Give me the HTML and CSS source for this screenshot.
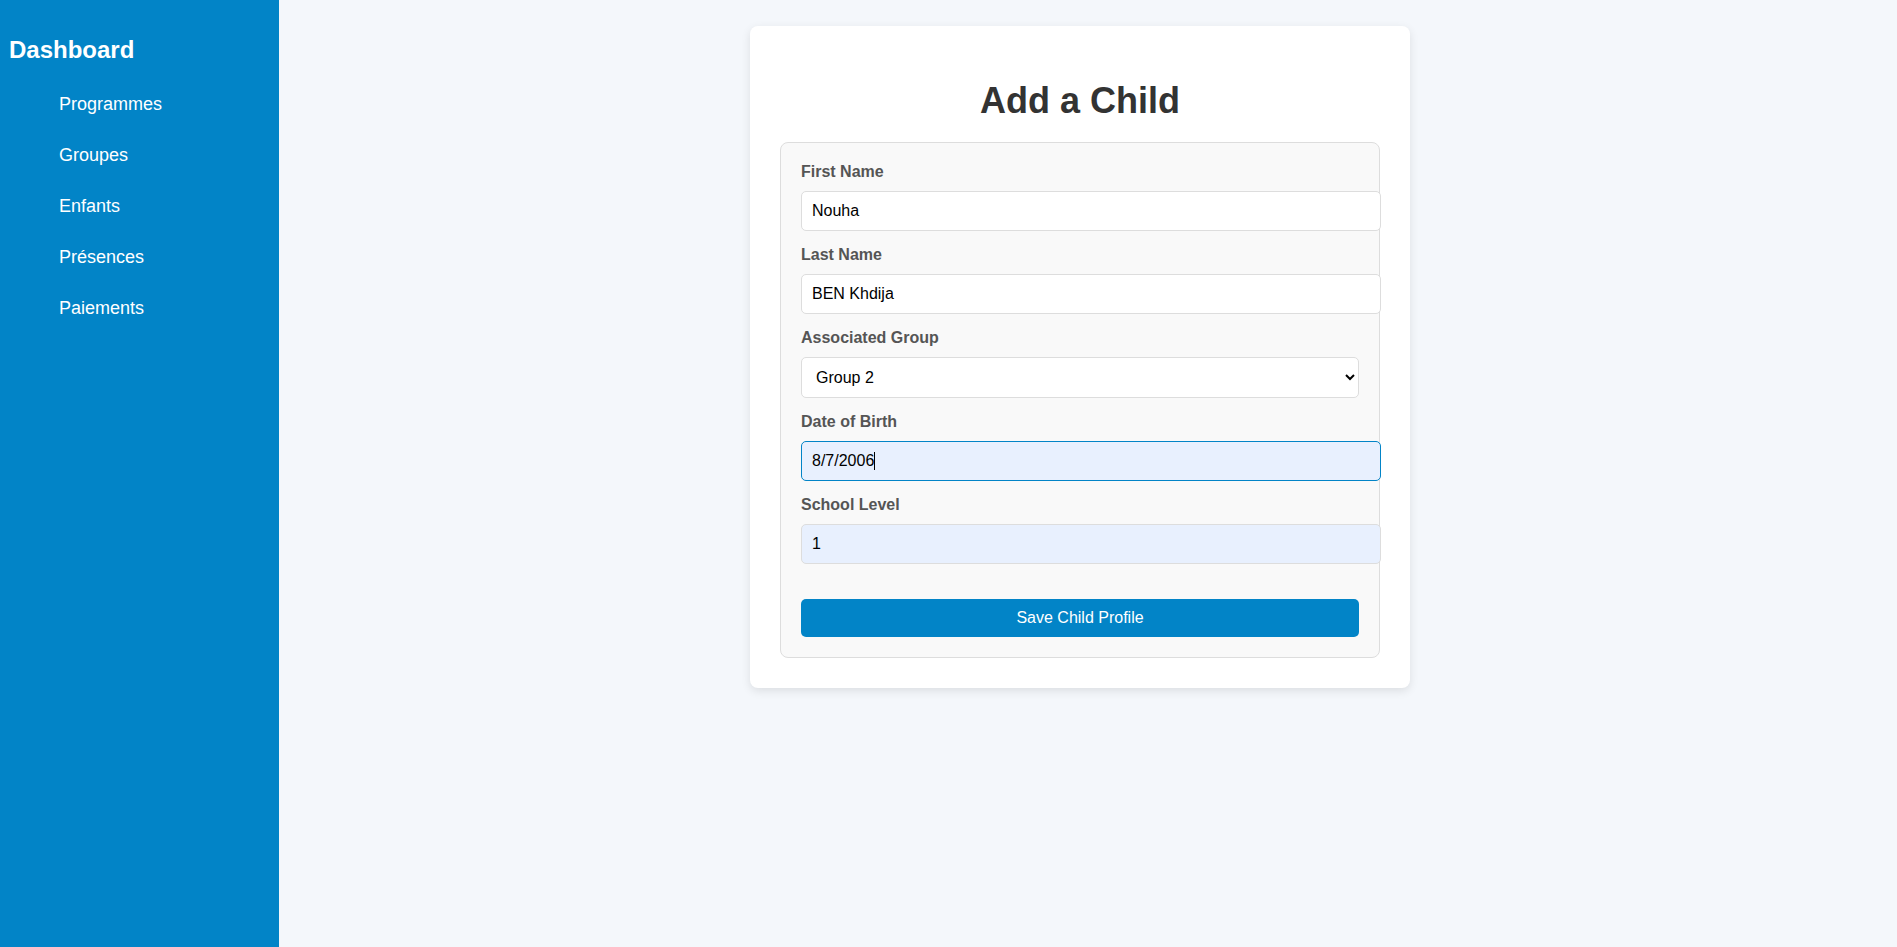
FILE: index.html
```html
<!DOCTYPE html>
<html lang="fr">
<head>
<meta charset="utf-8">
<title>Add a Child</title>
<link rel="stylesheet" href="styles.css">
</head>
<body>
<div class="layout">
  <aside class="sidebar">
    <h2 class="brand">Dashboard</h2>
    <ul class="nav">
      <li><a href="#">Programmes</a></li>
      <li><a href="#">Groupes</a></li>
      <li><a href="#">Enfants</a></li>
      <li><a href="#">Présences</a></li>
      <li><a href="#">Paiements</a></li>
    </ul>
  </aside>
  <main class="main">
    <section class="card">
      <h1 class="title">Add a Child</h1>
      <form class="form">
        <label class="label">First Name</label>
        <input class="field" type="text" value="Nouha">
        <label class="label">Last Name</label>
        <input class="field" type="text" value="BEN Khdija">
        <label class="label">Associated Group</label>
        <select class="select">
          <option>Group 1</option>
          <option selected>Group 2</option>
          <option>Group 3</option>
        </select>
        <label class="label">Date of Birth</label>
        <div class="field field-focus">8/7/2006<span class="caret"></span></div>
        <label class="label">School Level</label>
        <input class="field field-autofill" type="text" value="1">
        <button class="btn" type="button">Save Child Profile</button>
      </form>
    </section>
  </main>
</div>
</body>
</html>
```
FILE: styles.css
```css
* { font-family: "Liberation Sans", Arial, sans-serif; }
html, body { margin: 0; padding: 0; }
body { background: #f4f7fb; }

.layout {
  display: flex;
  min-height: 947px;
}

.sidebar {
  width: 261px;
  flex: 0 0 auto;
  background: #0284c7;
  color: #fff;
  padding: 16px 9px 0 9px;
}

.brand {
  font-size: 24px;
  font-weight: bold;
  margin: 20px 0;
}

.nav {
  list-style: none;
  margin: 16px 0;
  padding: 0 0 0 40px;
}

.nav li { margin: 0 0 10px 0; }

.nav a {
  display: block;
  padding: 10px;
  color: #fff;
  text-decoration: none;
  font-size: 18px;
}

.main {
  flex: 1;
  padding: 26px 16px 0 0;
}

.card {
  width: 600px;
  margin: 0 auto;
  background: #fff;
  padding: 30px;
  border-radius: 8px;
  box-shadow: 0 3px 10px rgba(0, 0, 0, 0.1);
}

.title {
  font-size: 36px;
  font-weight: bold;
  color: #333;
  text-align: center;
  margin: 24px 0 20px 0;
}

.form {
  background: #f9f9f9;
  border: 1px solid #ddd;
  border-radius: 8px;
  padding: 20px;
}

.label {
  display: block;
  font-size: 16px;
  font-weight: bold;
  color: #555;
  margin-bottom: 10px;
}

.field {
  display: block;
  width: 100%;
  padding: 10px;
  font-size: 16px;
  line-height: normal;
  border: 1px solid #ddd;
  border-radius: 5px;
  background: #fff;
  color: #000;
  margin: 0 0 15px 0;
  outline: none;
}

div.field { height: 18px; line-height: 18px; }

.field-focus {
  border-color: #0284c7;
  background: #e8f0fe;
}

.caret {
  display: inline-block;
  width: 1px;
  height: 18px;
  background: #000;
  vertical-align: top;
}

.field-autofill { background: #e8f0fe; }

.select {
  display: block;
  width: 100%;
  box-sizing: border-box;
  height: 41px;
  padding: 0 10px;
  font-size: 16px;
  border: 1px solid #ddd;
  border-radius: 5px;
  background: #fff;
  color: #000;
  margin: 0 0 15px 0;
}

.btn {
  display: block;
  width: 100%;
  margin-top: 35px;
  padding: 10px;
  font-size: 16px;
  line-height: 18px;
  border: none;
  border-radius: 5px;
  background: #0284c7;
  color: #fff;
}
```
